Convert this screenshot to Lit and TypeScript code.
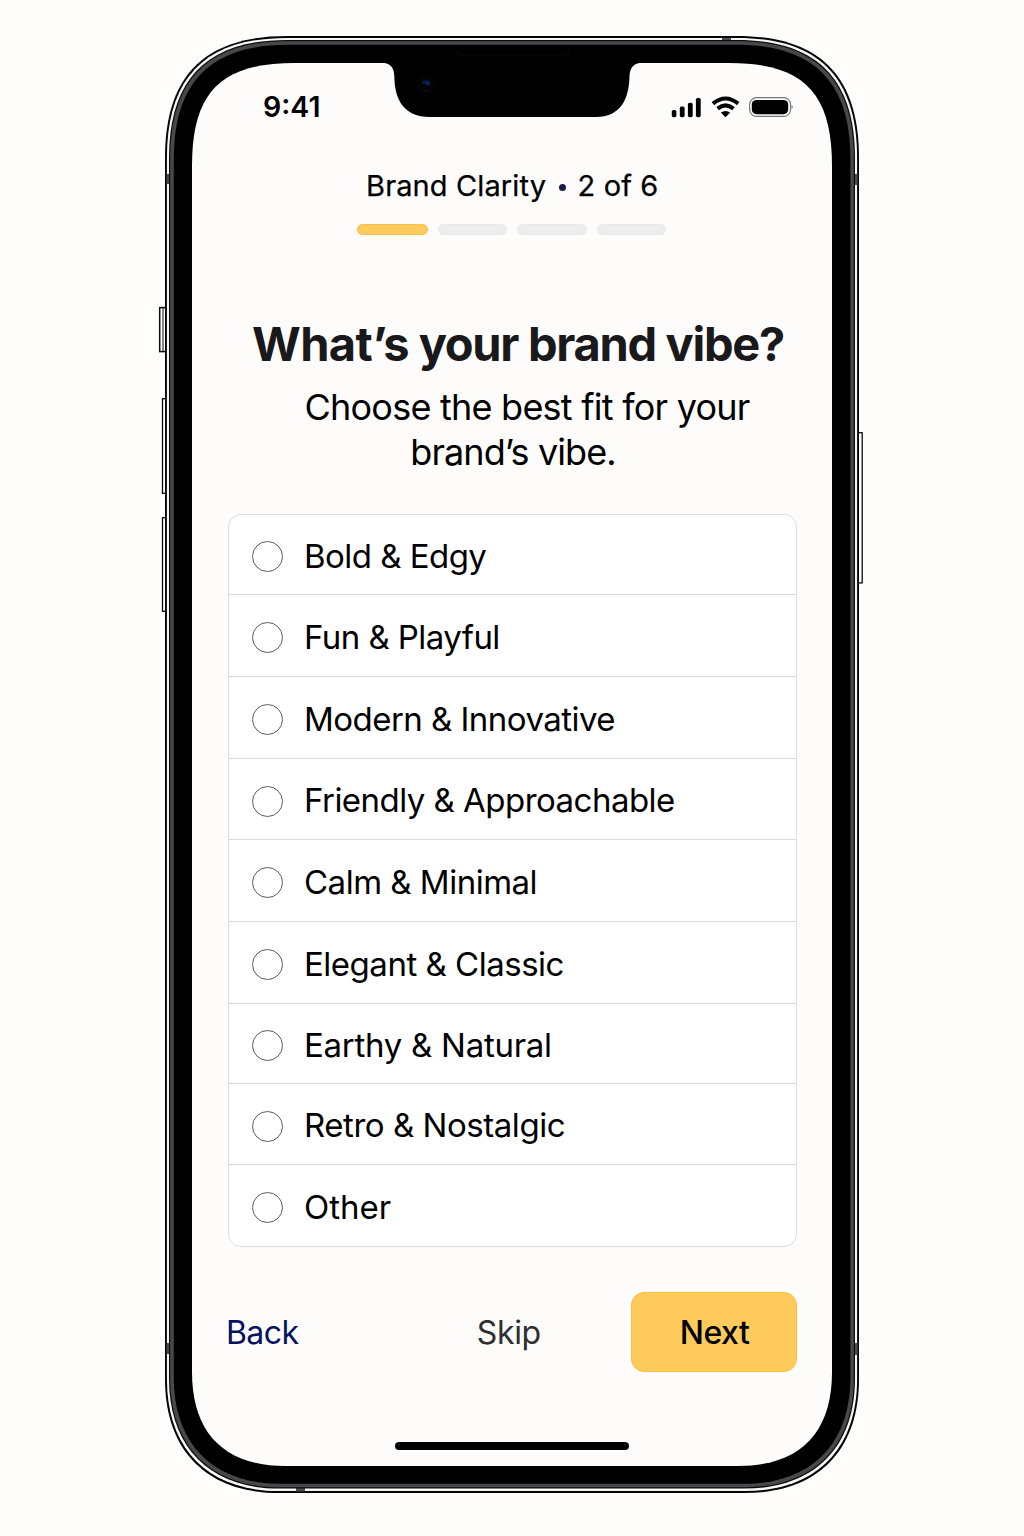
import { LitElement, html, svg, css } from "lit";
import { customElement, property } from "lit/decorators.js";
import { styleMap } from "lit/directives/style-map.js";

interface Vibe {
  name: string;
  /** Letter spacing in px. */
  tracking: number;
}

const VIBES: Vibe[] = [
  { name: "Bold & Edgy", tracking: -0.53 },
  { name: "Fun & Playful", tracking: -0.56 },
  { name: "Modern & Innovative", tracking: -0.53 },
  { name: "Friendly & Approachable", tracking: -0.53 },
  { name: "Calm & Minimal", tracking: -0.5 },
  { name: "Elegant & Classic", tracking: -0.49 },
  { name: "Earthy & Natural", tracking: -0.27 },
  { name: "Retro & Nostalgic", tracking: -0.46 },
  { name: "Other", tracking: 0.02 },
];

/**
 * Continuous-corner rectangle. e is the corner extent and c the control
 * offset; eb and cb are the same for the two bottom corners.
 */
function squircle(l: number, t: number, r: number, b: number, e: number, c: number, eb = e, cb = c): string {
  return [
    `M${l + e} ${t}H${r - e}C${r - c} ${t} ${r} ${t + c} ${r} ${t + e}`,
    `V${b - eb}C${r} ${b - cb} ${r - cb} ${b} ${r - eb} ${b}`,
    `H${l + eb}C${l + cb} ${b} ${l} ${b - cb} ${l} ${b - eb}`,
    `V${t + e}C${l} ${t + c} ${l + c} ${t} ${l + e} ${t}Z`,
  ].join("");
}

@customElement("phone-frame")
class PhoneFrame extends LitElement {
  static styles = css`
    :host { display: block; width: 1024px; height: 1536px; }
    svg { display: block; }
  `;

  render() {
    const band = (x: number, y: number, w: number, h: number) =>
      svg`<rect x=${x} y=${y} width=${w} height=${h} fill="#4a4b4d"/>`;
    return html`
      <svg width="1024" height="1536" viewBox="0 0 1024 1536" aria-hidden="true">
        <g fill="#fefdfc" stroke="#0a0a0a" stroke-width="1.5">
          <rect x="159.7" y="307.6" width="8" height="44"/>
          <path d="M163 308V351" stroke-width="1"/>
          <rect x="162.5" y="398.7" width="6" height="94.6" stroke-width="1.3"/>
          <rect x="162.5" y="517.7" width="6" height="93.6" stroke-width="1.3"/>
          <rect x="856" y="432.7" width="6.2" height="150.2" stroke-width="1.3"/>
        </g>
        <path d=${squircle(165, 36, 859, 1493, 122, 39.5, 114, 42)} fill="#050505"/>
        <path d=${squircle(166.9, 37.9, 857.1, 1491.1, 120, 39, 112, 41.5)} fill="#f6f6f4"/>
        ${band(166.8, 174, 3, 10)} ${band(854.5, 174, 3, 11)}
        ${band(166.8, 1343, 3, 11)} ${band(854.5, 1343, 3, 12)}
        ${band(722, 37.8, 9, 3)} ${band(296, 1488, 9, 3.4)}
        <path d=${squircle(169, 40, 855, 1488.6, 118, 38.5, 110, 41)} fill="#0d0d0d"/>
        <path d=${squircle(170.2, 41.2, 853.8, 1487.2, 117, 38, 109, 40.5)} fill="#47484a"/>
        <path d=${squircle(173.8, 44.8, 850.4, 1483.8, 114, 37, 106, 39.5)} fill="#000"/>
        <path d=${squircle(192, 63, 832, 1466, 103, 29, 94, 32.5)} fill="#fefcfb"/>
        <path
          d="M382 62.5C390 63.5 394 67 394.3 76C394.6 100 404 117 430 117H596C620 117 629 100 629.5 76C630 67 634 63.5 642 62.5Z"
          fill="#000"
        />
        <path d="M458 50Q456 55 461 55H565Q570 55 568 50" fill="none" stroke="#0b0b0b"/>
        <circle cx="426" cy="84.5" r="8.5" fill="#020204" stroke="#08080a"/>
        <path d="M421.8 83.5A4.6 4.6 0 0 1 430.6 83.5L427.6 86.3L425.4 83.4Z" fill="#08204f"/>
        <path d="M423.5 90.2Q426 91.4 428.5 90.2" fill="none" stroke="#071a40"/>
      </svg>
    `;
  }
}

@customElement("status-bar")
class StatusBar extends LitElement {
  static styles = css`
    :host { display: flex; justify-content: space-between; align-items: center; height: 34px; padding: 0 38px 0 71px; }
    .time { font-size: 28.5px; font-weight: 600; line-height: 34px; letter-spacing: 0; }
    svg { display: block; }
  `;

  render() {
    return html`
      <span class="time">9:41</span>
      <svg width="123" height="24" viewBox="671 95 123 24" aria-hidden="true">
        <rect x="671.8" y="110" width="4.6" height="7.2" rx="1.6"/>
        <rect x="679.8" y="106.6" width="4.8" height="10.6" rx="1.6"/>
        <rect x="687.9" y="102.8" width="4.8" height="14.4" rx="1.6"/>
        <rect x="695.9" y="98" width="4.8" height="19.2" rx="1.6"/>
        <g fill="none" stroke="#000" stroke-width="4">
          <path d="M712.9 103.6Q725.5 93.4 738.2 103.6"/>
          <path d="M717.6 108.6Q725.5 102.2 733.5 108.6"/>
        </g>
        <path d="M720.8 112.6Q725.5 109.2 730.2 112.6L725.5 117.2Z"/>
        <rect x="749.6" y="97.6" width="41" height="18.8" rx="7" fill="none" stroke="#77787a" stroke-width="1.2"/>
        <rect x="751.8" y="100" width="36.4" height="14.2" rx="4.6"/>
        <path d="M791.7 105Q793.8 106.8 791.7 108.8Z" fill="#666"/>
      </svg>
    `;
  }
}

@customElement("step-progress")
class StepProgress extends LitElement {
  @property({ type: Number }) filled = 1;

  static styles = css`
    :host { display: grid; justify-items: center; }
    .label { display: flex; align-items: center; font-size: 29px; line-height: 36px; height: 36px; letter-spacing: 0.12px; padding-left: 2.5px; -webkit-text-stroke: 0.25px #000; }
    .dot { width: 7px; height: 7px; border-radius: 50%; background: #172048; margin: 3px 12px 0 12.5px; }
    .bars { display: grid; grid-template-columns: 71px 69px 70px 69px; gap: 10px; margin-top: 20px; }
    .bar { height: 11px; box-sizing: border-box; border-radius: 5.5px; background: #ededed; border: 1px solid #e8e8e8; }
    .bar.on { background: #fdca5c; border-color: #fbc04a; }
  `;

  render() {
    return html`
      <div class="label"><span>Brand Clarity</span><i class="dot"></i><span>2 of 6</span></div>
      <div class="bars">
        ${[0, 1, 2, 3].map((i) => html`<div class="bar ${i < this.filled ? "on" : ""}"></div>`)}
      </div>
    `;
  }
}

@customElement("vibe-list")
class VibeList extends LitElement {
  static styles = css`
    :host {
      display: grid;
      grid-template-rows: 80px 82px 82px 81px 82px 82px 80px 81px 81px;
      box-sizing: border-box;
      border: 1px solid #dcdddf;
      border-radius: 13px;
      background: #fff;
      overflow: hidden;
    }
    .row { display: flex; align-items: center; gap: 21px; padding: 4px 0 0 23.5px; box-sizing: border-box; border-bottom: 1px solid #d9dadc; }
    .row:last-child { border-bottom: 0; }
    .radio { width: 31px; height: 31px; box-sizing: border-box; border: 1.5px solid #5c5c5e; border-radius: 50%; flex: none; }
    .name { font-size: 33px; line-height: 40px; padding-bottom: 2px; }
  `;

  render() {
    return VIBES.map(
      (v) => html`
        <div class="row">
          <span class="radio"></span>
          <span class="name" style=${styleMap({ letterSpacing: `${v.tracking}px` })}>${v.name}</span>
        </div>
      `,
    );
  }
}

@customElement("app-root")
class AppRoot extends LitElement {
  static styles = css`
    :host {
      display: block;
      position: relative;
      width: 1024px;
      height: 1536px;
      overflow: hidden;
      background: #fefdfc;
      color: #000;
      font-family: Inter, "Liberation Sans", sans-serif;
    }
    .screen {
      position: absolute;
      inset: 63px 192px 70px 192px;
      display: flex;
      flex-direction: column;
    }
    .frame { position: absolute; inset: 0; }
    status-bar { margin-top: 27px; }
    step-progress { margin-top: 44px; padding-right: 2px; }
    h1 { margin: 80px 0 0 12px; text-align: center; font-size: 47px; line-height: 58px; font-weight: 700; letter-spacing: -1.3px; color: #19191b; white-space: nowrap; }
    h1 .lead { letter-spacing: -0.65px; }
    .sub { margin: 12px 0 0 30px; text-align: center; font-size: 36px; line-height: 45px; letter-spacing: -0.76px; }
    .sub .tail { display: block; margin-right: 28px; letter-spacing: -0.9px; }
    vibe-list { margin: 39px 35px 0 35.5px; height: 733px; }
    .actions { display: flex; align-items: center; margin: 45px 35px 0 34px; font-size: 32px; height: 80px; }
    .back { color: #05125f; letter-spacing: -0.6px; }
    .skip { color: #2f2f31; margin-left: 178.5px; letter-spacing: -0.4px; }
    .next { margin-left: auto; width: 166px; height: 80px; box-sizing: border-box; border: 1px solid #fbbf48; border-radius: 13px; background: #feca5c; display: grid; place-items: center; font-weight: 500; letter-spacing: -0.5px; padding-left: 1px; }
    .home { width: 234px; height: 8px; border-radius: 4px; background: #000; margin: 70px 0 0 203px; }
  `;

  render() {
    return html`
      <phone-frame class="frame"></phone-frame>
      <main class="screen">
        <status-bar></status-bar>
        <step-progress .filled=${1}></step-progress>
        <h1><span class="lead">What’s</span> your brand vibe?</h1>
        <div class="sub">Choose the best fit for your <span class="tail">brand’s vibe.</span></div>
        <vibe-list></vibe-list>
        <div class="actions">
          <span class="back">Back</span>
          <span class="skip">Skip</span>
          <span class="next">Next</span>
        </div>
        <div class="home"></div>
      </main>
    `;
  }
}
